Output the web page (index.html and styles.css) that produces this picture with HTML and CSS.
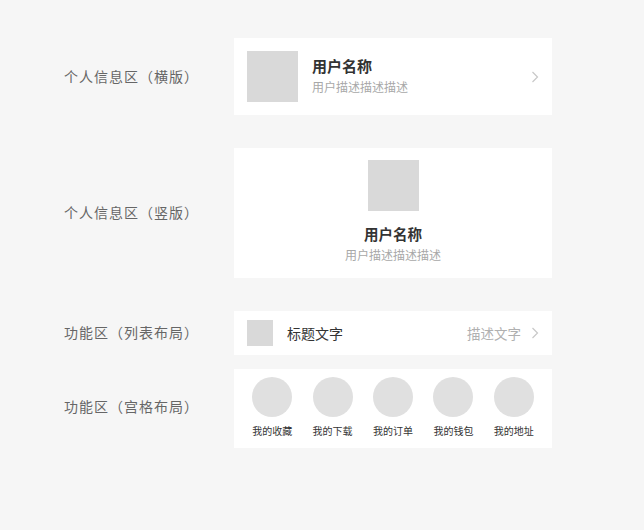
FILE: index.html
```html
<!DOCTYPE html>
<html>
<head>
  <meta charset="UTF-8">
  <title>个人中心组件</title>
  <link rel="stylesheet" href="styles.css">
</head>
<body>

  <div class="page">

    <div class="row">
      <div class="label">个人信息区（横版）</div>
      <div class="card card-h">
        <div class="avatar"></div>
        <div class="info">
          <div class="name">用户名称</div>
          <div class="desc">用户描述描述描述</div>
        </div>
        <svg class="arrow" width="8" height="12" viewBox="0 0 8 12"><path d="M1.5 1 L6.5 6 L1.5 11" fill="none" stroke="#c8c8c8" stroke-width="1.2"/></svg>
      </div>
    </div>

    <div class="row row-v">
      <div class="label">个人信息区（竖版）</div>
      <div class="card card-v">
        <div class="avatar"></div>
        <div class="name">用户名称</div>
        <div class="desc">用户描述描述描述</div>
      </div>
    </div>

    <div class="row row-list">
      <div class="label">功能区（列表布局）</div>
      <div class="card card-list">
        <div class="icon"></div>
        <div class="title">标题文字</div>
        <div class="more">描述文字</div>
        <svg class="arrow" width="8" height="12" viewBox="0 0 8 12"><path d="M1.5 1 L6.5 6 L1.5 11" fill="none" stroke="#c8c8c8" stroke-width="1.2"/></svg>
      </div>
    </div>

    <div class="row row-grid">
      <div class="label">功能区（宫格布局）</div>
      <div class="card card-grid">
        <div class="cell"><div class="circle"></div><span>我的收藏</span></div>
        <div class="cell"><div class="circle"></div><span>我的下载</span></div>
        <div class="cell"><div class="circle"></div><span>我的订单</span></div>
        <div class="cell"><div class="circle"></div><span>我的钱包</span></div>
        <div class="cell"><div class="circle"></div><span>我的地址</span></div>
      </div>
    </div>

  </div>

</body>
</html>
```

FILE: styles.css
```css
html, body { margin:0; padding:0; background:#f6f6f6; }
body { font-family:"Noto Sans CJK SC", "Noto Sans", sans-serif; width:644px; height:530px; overflow:hidden; }

.page { padding:38px 0 0 64px; display:flex; flex-direction:column; }
.row { display:flex; align-items:center; }
.row-v { margin-top:33px; }
.row-list { margin-top:33px; }
.row-grid { margin-top:14px; }

.label { width:170px; font-size:14px; letter-spacing:1px; color:#666; line-height:20px; margin-top:-2px; }
.row-list .label { margin-top:-3px; }
.row-grid .label { margin-top:-5px; }

.card { width:318px; background:#fff; box-sizing:border-box; }

.avatar { width:51px; height:51px; background:#d9d9d9; flex:none; }
.name { font-size:15px; font-weight:bold; color:#333; line-height:20px; }
.desc { font-size:12px; color:#a8a8a8; line-height:17px; }
.arrow { flex:none; }

.card-h { display:flex; align-items:center; padding:13px; height:77px; }
.card-h .info { flex:1; margin-left:14px; display:flex; flex-direction:column; gap:2px; margin-top:-2px; }

.card-v { display:flex; flex-direction:column; align-items:center; padding:12px 0 13px; height:130px; }
.card-v .name { margin-top:13px; font-size:14.5px; }
.card-v .desc { margin-top:2px; }

.card-list { display:flex; align-items:center; height:44px; padding:0 13px; }
.card-list .icon { width:26px; height:26px; background:#d9d9d9; }
.card-list .title { flex:1; margin-left:14px; font-size:14px; color:#333; }
.card-list .more { font-size:13.5px; color:#b0b0b0; margin-right:10px; }

.card-grid { display:grid; grid-template-columns:repeat(5, 1fr); padding:8px 8px 9px; height:79px; }
.cell { display:flex; flex-direction:column; align-items:center; }
.circle { width:40px; height:40px; border-radius:50%; background:#e0e0e0; }
.cell span { margin-top:7px; font-size:10px; line-height:14px; color:#333; }
```
